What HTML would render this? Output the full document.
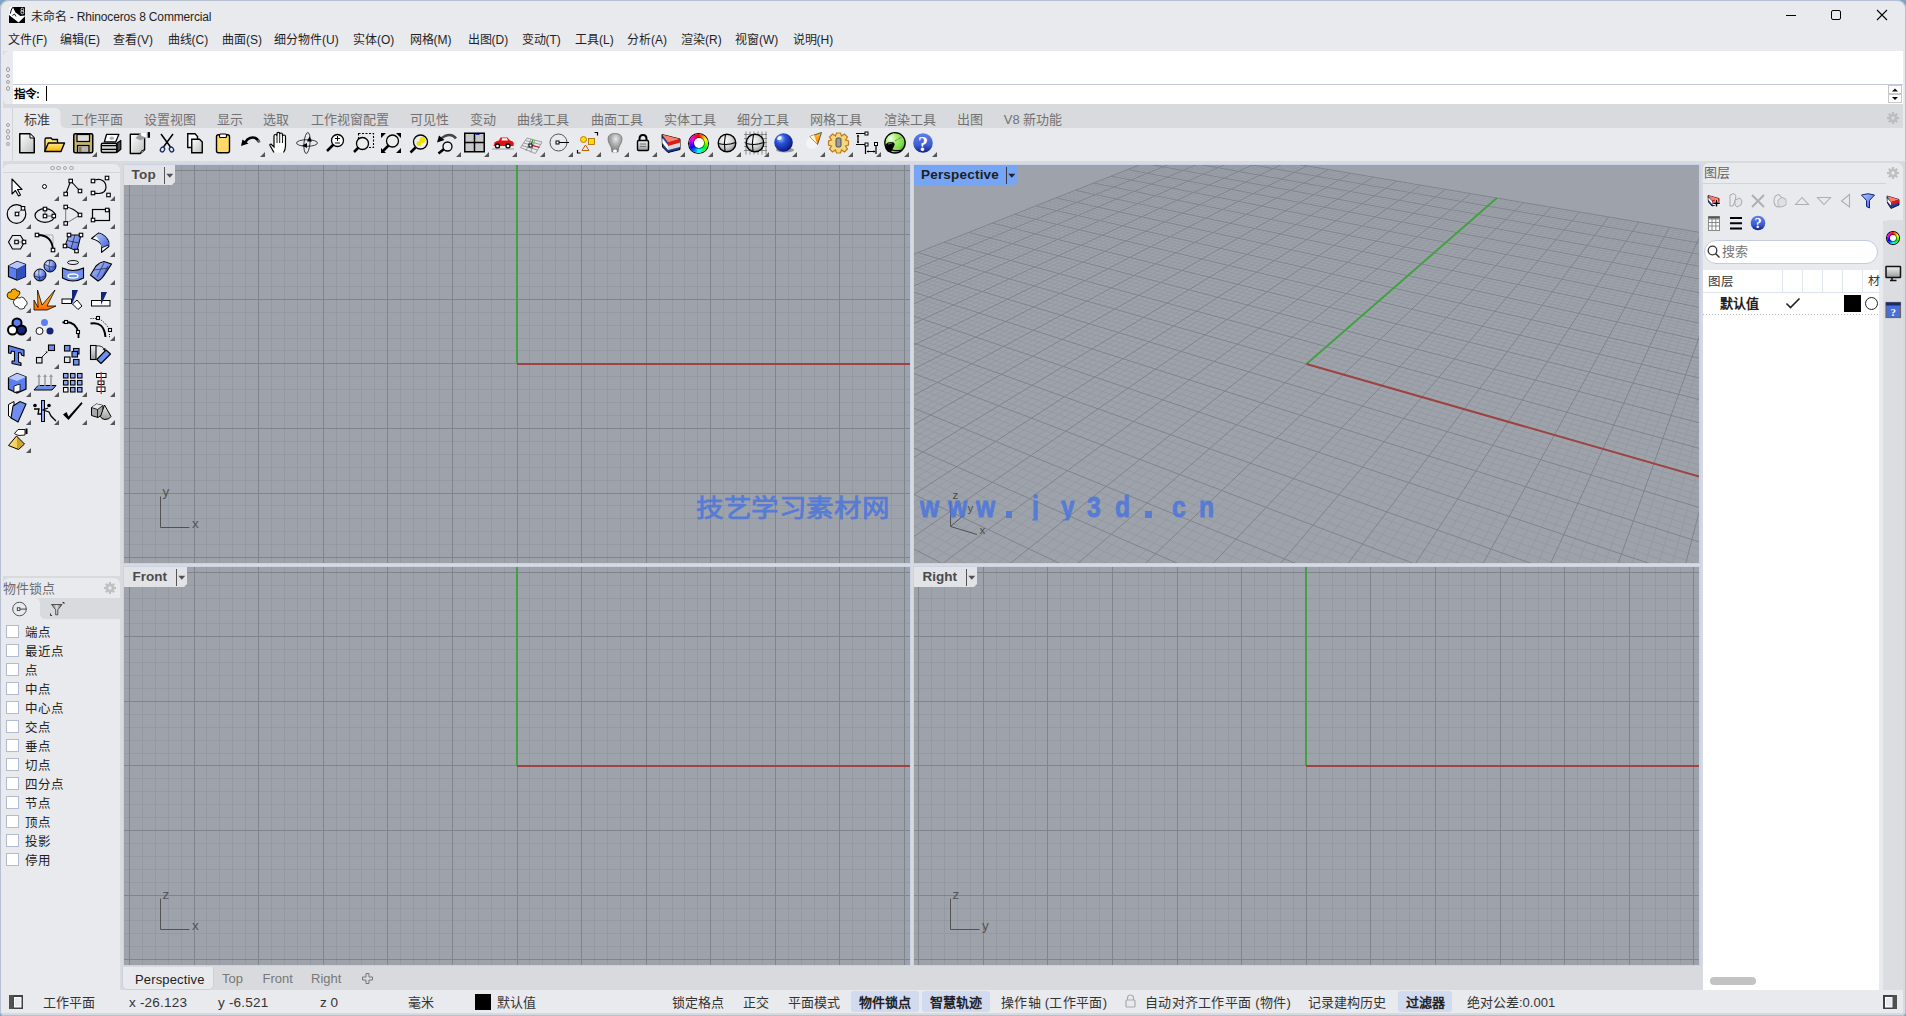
<!DOCTYPE html>
<html lang="zh-CN"><head><meta charset="utf-8"><title>Rhino</title>
<style>
html,body{margin:0;padding:0}
body{width:1906px;height:1016px;overflow:hidden;position:relative;background:#e9eaee;font-family:"Liberation Sans", sans-serif}
.r{position:absolute;display:block}
.t{position:absolute;white-space:nowrap;line-height:1;font-family:"Liberation Sans", sans-serif}
svg.r{overflow:hidden}
</style></head><body>
<div class="r" style="left:0px;top:0px;width:1906px;height:1016px;background:#e9eaee;"></div><div class="t" style="left:31px;top:10.5px;font-size:12px;color:#1f1f1f;font-weight:normal;letter-spacing:-0.15px">未命名 - Rhinoceros 8 Commercial</div><svg class="r" style="left:1780px;top:4px" width="120" height="22"><path d="M6 11.5H16" stroke="#000" stroke-width="1"/><rect x="51.5" y="6.5" width="9" height="9" rx="1.5" fill="none" stroke="#000" stroke-width="1"/><path d="M97 6L107 16M107 6L97 16" stroke="#000" stroke-width="1.1"/></svg><div class="t" style="left:8px;top:33.8px;font-size:12px;color:#1f1f1f;font-weight:normal;">文件(F)</div><div class="t" style="left:60px;top:33.8px;font-size:12px;color:#1f1f1f;font-weight:normal;">编辑(E)</div><div class="t" style="left:113px;top:33.8px;font-size:12px;color:#1f1f1f;font-weight:normal;">查看(V)</div><div class="t" style="left:167.5px;top:33.8px;font-size:12px;color:#1f1f1f;font-weight:normal;">曲线(C)</div><div class="t" style="left:222px;top:33.8px;font-size:12px;color:#1f1f1f;font-weight:normal;">曲面(S)</div><div class="t" style="left:274px;top:33.8px;font-size:12px;color:#1f1f1f;font-weight:normal;">细分物件(U)</div><div class="t" style="left:353px;top:33.8px;font-size:12px;color:#1f1f1f;font-weight:normal;">实体(O)</div><div class="t" style="left:409.5px;top:33.8px;font-size:12px;color:#1f1f1f;font-weight:normal;">网格(M)</div><div class="t" style="left:467.5px;top:33.8px;font-size:12px;color:#1f1f1f;font-weight:normal;">出图(D)</div><div class="t" style="left:521.5px;top:33.8px;font-size:12px;color:#1f1f1f;font-weight:normal;">变动(T)</div><div class="t" style="left:575px;top:33.8px;font-size:12px;color:#1f1f1f;font-weight:normal;">工具(L)</div><div class="t" style="left:627px;top:33.8px;font-size:12px;color:#1f1f1f;font-weight:normal;">分析(A)</div><div class="t" style="left:681px;top:33.8px;font-size:12px;color:#1f1f1f;font-weight:normal;">渲染(R)</div><div class="t" style="left:735px;top:33.8px;font-size:12px;color:#1f1f1f;font-weight:normal;">视窗(W)</div><div class="t" style="left:792.5px;top:33.8px;font-size:12px;color:#1f1f1f;font-weight:normal;">说明(H)</div><div class="r" style="left:3px;top:51px;width:1900px;height:54px;background:#d9dade;"></div><div class="r" style="left:3px;top:51px;width:10px;height:54px;background:#e9eaee;border-radius:6px 0 0 6px"></div><div class="r" style="left:13px;top:51px;width:1890px;height:54px;background:#ffffff;"></div><div class="r" style="left:13px;top:84px;width:1890px;height:1px;background:#c3cadb;"></div><div class="r" style="left:5.5px;top:67.3px;width:2.5px;height:2.5px;border:1px solid #a0a0a0;border-radius:50%"></div><div class="r" style="left:5.5px;top:73.6px;width:2.5px;height:2.5px;border:1px solid #a0a0a0;border-radius:50%"></div><div class="r" style="left:5.5px;top:79.9px;width:2.5px;height:2.5px;border:1px solid #a0a0a0;border-radius:50%"></div><div class="r" style="left:5.5px;top:86.2px;width:2.5px;height:2.5px;border:1px solid #a0a0a0;border-radius:50%"></div><div class="t" style="left:14px;top:88.5px;font-size:11.5px;color:#000;font-weight:bold;">指令:</div><div class="r" style="left:46px;top:86px;width:1px;height:15px;background:#000;"></div><svg class="r" style="left:1888px;top:85px" width="15" height="19"><rect x="0.5" y="0.5" width="13" height="8" fill="#fff" stroke="#c8c8c8"/><rect x="0.5" y="9.5" width="13" height="8" fill="#fff" stroke="#c8c8c8"/><path d="M4 6.5L7 3.5L10 6.5Z" fill="#000"/><path d="M4 12L7 15L10 12Z" fill="#000"/></svg><div class="r" style="left:3px;top:104px;width:1900px;height:4px;background:#d9dade;"></div><div class="r" style="left:3px;top:108px;width:1900px;height:53px;background:#e9eaee;border-radius:6px 6px 0 0"></div><div class="r" style="left:13px;top:108px;width:1890px;height:20px;background:#d9dade;"></div><svg class="r" style="left:13px;top:108px" width="60" height="20"><path d="M0 0H41Q47.5 0 47.5 6V14Q47.5 20 53.5 20H0Z" fill="#e9eaee"/></svg><div class="r" style="left:12px;top:108px;width:1px;height:53px;background:#d3d4d8;"></div><div class="r" style="left:5.5px;top:122.7px;width:2.5px;height:2.5px;border:1px solid #a0a0a0;border-radius:50%"></div><div class="r" style="left:5.5px;top:129px;width:2.5px;height:2.5px;border:1px solid #a0a0a0;border-radius:50%"></div><div class="r" style="left:5.5px;top:135.3px;width:2.5px;height:2.5px;border:1px solid #a0a0a0;border-radius:50%"></div><div class="r" style="left:5.5px;top:141.6px;width:2.5px;height:2.5px;border:1px solid #a0a0a0;border-radius:50%"></div><div class="t" style="left:24px;top:112.5px;font-size:13px;color:#3a3a3a;font-weight:normal;">标准</div><div class="t" style="left:70.5px;top:112.5px;font-size:13px;color:#727272;font-weight:normal;">工作平面</div><div class="t" style="left:143.6px;top:112.5px;font-size:13px;color:#727272;font-weight:normal;">设置视图</div><div class="t" style="left:217px;top:112.5px;font-size:13px;color:#727272;font-weight:normal;">显示</div><div class="t" style="left:263px;top:112.5px;font-size:13px;color:#727272;font-weight:normal;">选取</div><div class="t" style="left:310.6px;top:112.5px;font-size:13px;color:#727272;font-weight:normal;">工作视窗配置</div><div class="t" style="left:410px;top:112.5px;font-size:13px;color:#727272;font-weight:normal;">可见性</div><div class="t" style="left:470px;top:112.5px;font-size:13px;color:#727272;font-weight:normal;">变动</div><div class="t" style="left:517.3px;top:112.5px;font-size:13px;color:#727272;font-weight:normal;">曲线工具</div><div class="t" style="left:590.6px;top:112.5px;font-size:13px;color:#727272;font-weight:normal;">曲面工具</div><div class="t" style="left:663.7px;top:112.5px;font-size:13px;color:#727272;font-weight:normal;">实体工具</div><div class="t" style="left:737.2px;top:112.5px;font-size:13px;color:#727272;font-weight:normal;">细分工具</div><div class="t" style="left:810.3px;top:112.5px;font-size:13px;color:#727272;font-weight:normal;">网格工具</div><div class="t" style="left:883.8px;top:112.5px;font-size:13px;color:#727272;font-weight:normal;">渲染工具</div><div class="t" style="left:957.4px;top:112.5px;font-size:13px;color:#727272;font-weight:normal;">出图</div><div class="t" style="left:1003.8px;top:112.5px;font-size:13px;color:#727272;font-weight:normal;">V8 新功能</div><svg class="r" style="left:1887px;top:112px" width="12" height="12" viewBox="0 0 12 12"><g fill="#bdbdbd"><circle cx="6" cy="6" r="4.2"/><rect x="4.9" y="0" width="2.2" height="3.5" transform="rotate(0 6 6)"/><rect x="4.9" y="0" width="2.2" height="3.5" transform="rotate(45 6 6)"/><rect x="4.9" y="0" width="2.2" height="3.5" transform="rotate(90 6 6)"/><rect x="4.9" y="0" width="2.2" height="3.5" transform="rotate(135 6 6)"/><rect x="4.9" y="0" width="2.2" height="3.5" transform="rotate(180 6 6)"/><rect x="4.9" y="0" width="2.2" height="3.5" transform="rotate(225 6 6)"/><rect x="4.9" y="0" width="2.2" height="3.5" transform="rotate(270 6 6)"/><rect x="4.9" y="0" width="2.2" height="3.5" transform="rotate(315 6 6)"/></g><circle cx="6" cy="6" r="1.7" fill="#d9dade"/></svg><div class="r" style="left:0px;top:161px;width:1906px;height:829px;background:#d9dade;"></div><div class="r" style="left:0px;top:161px;width:3px;height:829px;background:#e9eaee;"></div><div class="r" style="left:3px;top:164px;width:117px;height:412px;background:#e9eaee;border-radius:6px 6px 0 0"></div><div class="r" style="left:3px;top:172px;width:117px;height:1px;background:#d5d6da;"></div><div class="r" style="left:50px;top:165.6px;width:2.5px;height:2.5px;border:1px solid #a8a8a8;border-radius:50%"></div><div class="r" style="left:56.3px;top:165.6px;width:2.5px;height:2.5px;border:1px solid #a8a8a8;border-radius:50%"></div><div class="r" style="left:62.599999999999994px;top:165.6px;width:2.5px;height:2.5px;border:1px solid #a8a8a8;border-radius:50%"></div><div class="r" style="left:69px;top:165.6px;width:2.5px;height:2.5px;border:1px solid #a8a8a8;border-radius:50%"></div><div class="r" style="left:3px;top:578px;width:117px;height:412px;background:#e9eaee;border-radius:6px 6px 0 0"></div><div class="t" style="left:3px;top:582px;font-size:13px;color:#6d6d6d;font-weight:normal;">物件锁点</div><svg class="r" style="left:104px;top:582px" width="12" height="12" viewBox="0 0 12 12"><g fill="#c0c0c0"><circle cx="6" cy="6" r="4.2"/><rect x="4.9" y="0" width="2.2" height="3.5" transform="rotate(0 6 6)"/><rect x="4.9" y="0" width="2.2" height="3.5" transform="rotate(45 6 6)"/><rect x="4.9" y="0" width="2.2" height="3.5" transform="rotate(90 6 6)"/><rect x="4.9" y="0" width="2.2" height="3.5" transform="rotate(135 6 6)"/><rect x="4.9" y="0" width="2.2" height="3.5" transform="rotate(180 6 6)"/><rect x="4.9" y="0" width="2.2" height="3.5" transform="rotate(225 6 6)"/><rect x="4.9" y="0" width="2.2" height="3.5" transform="rotate(270 6 6)"/><rect x="4.9" y="0" width="2.2" height="3.5" transform="rotate(315 6 6)"/></g><circle cx="6" cy="6" r="1.7" fill="#e9eaee"/></svg><div class="r" style="left:3px;top:598px;width:117px;height:21px;background:#d9dade;"></div><svg class="r" style="left:3px;top:598px" width="50" height="21"><path d="M0 0H31Q37 0 37 6V15Q37 21 43 21H0Z" fill="#e9eaee"/></svg><svg class="r" style="left:11px;top:601px" width="18" height="17"><circle cx="8.5" cy="8" r="6.8" fill="none" stroke="#444" stroke-width="0.9"/><rect x="6.3" y="6.8" width="2.6" height="2.6" fill="#fff" stroke="#333" stroke-width="0.9"/><path d="M9 8.1H15.5" stroke="#333" stroke-width="0.9"/></svg><svg class="r" style="left:49px;top:601px" width="16" height="16"><defs><linearGradient id="gFun" x1="0" y1="0" x2="1" y2="0"><stop offset="0" stop-color="#666"/><stop offset="0.5" stop-color="#ddd"/><stop offset="1" stop-color="#555"/></linearGradient></defs><path d="M2.5 3.5H13L8.8 8.8V13.8H6.7V8.8Z" fill="url(#gFun)" stroke="#333" stroke-width="0.8"/><path d="M13.5 1.5H15V3M1.5 12.5V14.5H3" stroke="#333" fill="none" stroke-width="1"/></svg><div class="r" style="left:6px;top:625px;width:13px;height:13px;background:#ffffff;box-sizing:border-box;border:1px solid #b2bbd0"></div><div class="t" style="left:25px;top:627px;font-size:12.5px;color:#1f1f1f;font-weight:normal;">端点</div><div class="r" style="left:6px;top:644px;width:13px;height:13px;background:#ffffff;box-sizing:border-box;border:1px solid #b2bbd0"></div><div class="t" style="left:25px;top:646px;font-size:12.5px;color:#1f1f1f;font-weight:normal;">最近点</div><div class="r" style="left:6px;top:663px;width:13px;height:13px;background:#ffffff;box-sizing:border-box;border:1px solid #b2bbd0"></div><div class="t" style="left:25px;top:665px;font-size:12.5px;color:#1f1f1f;font-weight:normal;">点</div><div class="r" style="left:6px;top:682px;width:13px;height:13px;background:#ffffff;box-sizing:border-box;border:1px solid #b2bbd0"></div><div class="t" style="left:25px;top:684px;font-size:12.5px;color:#1f1f1f;font-weight:normal;">中点</div><div class="r" style="left:6px;top:701px;width:13px;height:13px;background:#ffffff;box-sizing:border-box;border:1px solid #b2bbd0"></div><div class="t" style="left:25px;top:703px;font-size:12.5px;color:#1f1f1f;font-weight:normal;">中心点</div><div class="r" style="left:6px;top:720px;width:13px;height:13px;background:#ffffff;box-sizing:border-box;border:1px solid #b2bbd0"></div><div class="t" style="left:25px;top:722px;font-size:12.5px;color:#1f1f1f;font-weight:normal;">交点</div><div class="r" style="left:6px;top:739px;width:13px;height:13px;background:#ffffff;box-sizing:border-box;border:1px solid #b2bbd0"></div><div class="t" style="left:25px;top:741px;font-size:12.5px;color:#1f1f1f;font-weight:normal;">垂点</div><div class="r" style="left:6px;top:758px;width:13px;height:13px;background:#ffffff;box-sizing:border-box;border:1px solid #b2bbd0"></div><div class="t" style="left:25px;top:760px;font-size:12.5px;color:#1f1f1f;font-weight:normal;">切点</div><div class="r" style="left:6px;top:777px;width:13px;height:13px;background:#ffffff;box-sizing:border-box;border:1px solid #b2bbd0"></div><div class="t" style="left:25px;top:779px;font-size:12.5px;color:#1f1f1f;font-weight:normal;">四分点</div><div class="r" style="left:6px;top:796px;width:13px;height:13px;background:#ffffff;box-sizing:border-box;border:1px solid #b2bbd0"></div><div class="t" style="left:25px;top:798px;font-size:12.5px;color:#1f1f1f;font-weight:normal;">节点</div><div class="r" style="left:6px;top:815px;width:13px;height:13px;background:#ffffff;box-sizing:border-box;border:1px solid #b2bbd0"></div><div class="t" style="left:25px;top:817px;font-size:12.5px;color:#1f1f1f;font-weight:normal;">顶点</div><div class="r" style="left:6px;top:834px;width:13px;height:13px;background:#ffffff;box-sizing:border-box;border:1px solid #b2bbd0"></div><div class="t" style="left:25px;top:836px;font-size:12.5px;color:#1f1f1f;font-weight:normal;">投影</div><div class="r" style="left:6px;top:853px;width:13px;height:13px;background:#ffffff;box-sizing:border-box;border:1px solid #b2bbd0"></div><div class="t" style="left:25px;top:855px;font-size:12.5px;color:#1f1f1f;font-weight:normal;">停用</div><div class="r" style="left:123px;top:164px;width:788px;height:400px;background:#c9d2e6;"></div><div class="r" style="left:913px;top:164px;width:788px;height:400px;background:#c9d2e6;"></div><div class="r" style="left:123px;top:566px;width:788px;height:400px;background:#c9d2e6;"></div><div class="r" style="left:913px;top:566px;width:788px;height:400px;background:#c9d2e6;"></div><svg class="r" style="left:124px;top:165px" width="786" height="398" viewBox="0 0 786 398"><rect width="786" height="398" fill="#9ea3ab"/><path d="M18.5 0V398M31.5 0V398M44.5 0V398M57.5 0V398M82.5 0V398M95.5 0V398M108.5 0V398M121.5 0V398M147.5 0V398M160.5 0V398M173.5 0V398M186.5 0V398M212.5 0V398M225.5 0V398M237.5 0V398M250.5 0V398M276.5 0V398M289.5 0V398M302.5 0V398M315.5 0V398M341.5 0V398M354.5 0V398M367.5 0V398M380.5 0V398M405.5 0V398M418.5 0V398M431.5 0V398M444.5 0V398M470.5 0V398M483.5 0V398M496.5 0V398M509.5 0V398M535.5 0V398M548.5 0V398M560.5 0V398M573.5 0V398M599.5 0V398M612.5 0V398M625.5 0V398M638.5 0V398M664.5 0V398M677.5 0V398M690.5 0V398M703.5 0V398M728.5 0V398M741.5 0V398M754.5 0V398M767.5 0V398M0 18.5H786M0 30.5H786M0 43.5H786M0 56.5H786M0 82.5H786M0 95.5H786M0 108.5H786M0 121.5H786M0 147.5H786M0 160.5H786M0 173.5H786M0 185.5H786M0 211.5H786M0 224.5H786M0 237.5H786M0 250.5H786M0 276.5H786M0 289.5H786M0 302.5H786M0 315.5H786M0 340.5H786M0 353.5H786M0 366.5H786M0 379.5H786" stroke="#959aa2" stroke-width="1" fill="none"/><path d="M5.5 0V398M70.5 0V398M134.5 0V398M199.5 0V398M263.5 0V398M328.5 0V398M393.5 0V398M457.5 0V398M522.5 0V398M586.5 0V398M651.5 0V398M715.5 0V398M780.5 0V398M0 5.5H786M0 69.5H786M0 134.5H786M0 198.5H786M0 263.5H786M0 328.5H786M0 392.5H786" stroke="#80848c" stroke-width="1" fill="none"/><rect x="392" y="0" width="2" height="199" fill="#43a043"/><rect x="393" y="198" width="393" height="2" fill="#9e4242"/></svg><svg class="r" style="left:914px;top:165px" width="785" height="398" viewBox="0 0 785 398"><rect width="785" height="398" fill="#9ea3ab"/><path d="M-623.8 340.8L277.7 -18.7M-612.6 331.4L1547.5 2267.1M-620.0 344.2L281.4 -18.0M-598.0 325.7L1525.0 2171.2M-616.2 347.7L285.1 -17.4M-583.6 320.0L1504.1 2082.2M-612.4 351.3L288.9 -16.8M-569.5 314.4L1484.7 1999.4M-604.6 358.5L296.4 -15.5M-542.1 303.6L1449.7 1850.0M-600.6 362.1L300.2 -14.8M-528.8 298.3L1433.9 1782.4M-596.6 365.9L304.1 -14.2M-515.7 293.1L1419.0 1719.0M-592.6 369.6L307.9 -13.5M-502.8 288.0L1405.0 1659.3M-584.3 377.2L315.6 -12.2M-477.8 278.1L1379.4 1550.0M-580.1 381.1L319.5 -11.6M-465.6 273.3L1367.7 1499.8M-575.9 385.0L323.4 -10.9M-453.5 268.5L1356.5 1452.3M-571.6 389.0L327.4 -10.2M-441.7 263.9L1346.0 1407.3M-562.8 397.1L335.3 -8.9M-418.7 254.8L1326.4 1323.9M-558.4 401.2L339.3 -8.2M-407.5 250.3L1317.4 1285.2M-553.9 405.4L343.3 -7.5M-396.5 245.9L1308.7 1248.3M-549.3 409.6L347.3 -6.8M-385.6 241.6L1300.5 1213.1M-540.0 418.2L355.4 -5.5M-364.4 233.3L1285.1 1147.4M-535.3 422.6L359.5 -4.8M-354.0 229.2L1277.8 1116.6M-530.5 427.0L363.6 -4.1M-343.8 225.1L1270.9 1087.1M-525.6 431.5L367.8 -3.4M-333.8 221.2L1264.3 1058.9M-515.7 440.7L376.1 -2.0M-314.2 213.4L1251.9 1005.7M-510.7 445.3L380.3 -1.3M-304.6 209.6L1246.0 980.7M-505.6 450.0L384.5 -0.5M-295.2 205.9L1240.3 956.6M-500.4 454.8L388.7 0.2M-285.9 202.2L1234.9 933.4M-489.8 464.6L397.3 1.6M-267.7 195.0L1224.6 889.5M-484.5 469.6L401.6 2.3M-258.8 191.5L1219.8 868.8M-479.0 474.6L405.9 3.1M-250.0 188.0L1215.1 848.7M-473.5 479.7L410.2 3.8M-241.4 184.6L1210.5 829.3M-462.2 490.1L419.0 5.3M-224.5 177.9L1201.9 792.5M-456.5 495.5L423.4 6.0M-216.2 174.6L1197.8 775.0M-450.6 500.9L427.8 6.8M-208.1 171.4L1193.8 758.1M-444.7 506.3L432.3 7.5M-200.0 168.2L1190.0 741.6M-432.6 517.5L441.3 9.1M-184.3 162.0L1182.6 710.3M-426.5 523.2L445.8 9.8M-176.5 159.0L1179.1 695.3M-420.2 529.0L450.3 10.6M-168.9 155.9L1175.7 680.8M-413.9 534.8L454.9 11.4M-161.4 153.0L1172.4 666.7M-400.9 546.8L464.1 12.9M-146.7 147.1L1166.1 639.7M-394.3 553.0L468.8 13.7M-139.5 144.3L1163.0 626.8M-387.5 559.2L473.5 14.5M-132.4 141.5L1160.1 614.2M-380.7 565.5L478.1 15.3M-125.3 138.7L1157.2 602.0M-366.7 578.4L487.6 16.9M-111.5 133.2L1151.7 578.5M-359.6 585.0L492.4 17.7M-104.8 130.6L1149.1 567.2M-352.3 591.7L497.2 18.5M-98.1 127.9L1146.5 556.2M-345.0 598.5L502.0 19.4M-91.5 125.3L1144.0 545.5M-329.9 612.5L511.7 21.0M-78.6 120.2L1139.1 524.8M-322.2 619.6L516.6 21.8M-72.2 117.7L1136.8 514.9M-314.3 626.9L521.5 22.7M-66.0 115.2L1134.5 505.2M-306.4 634.2L526.5 23.5M-59.8 112.7L1132.3 495.7M-290.0 649.3L536.5 25.2M-47.6 107.9L1128.0 477.5M-281.7 657.1L541.5 26.1M-41.6 105.6L1126.0 468.6M-273.2 664.9L546.6 26.9M-35.7 103.2L1124.0 460.0M-264.5 672.9L551.7 27.8M-29.9 100.9L1122.0 451.6M-246.8 689.3L561.9 29.5M-18.4 96.4L1118.2 435.3M-237.7 697.8L567.1 30.4M-12.8 94.2L1116.3 427.4M-228.4 706.3L572.3 31.3M-7.2 92.0L1114.5 419.7M-219.0 715.0L577.5 32.2M-1.7 89.8L1112.7 412.2M-199.6 732.9L588.1 33.9M9.1 85.5L1109.3 397.6M-189.7 742.1L593.4 34.9M14.4 83.4L1107.7 390.5M-179.6 751.5L598.8 35.8M19.7 81.3L1106.0 383.6M-169.3 761.0L604.1 36.7M24.9 79.3L1104.4 376.8M-148.1 780.6L615.0 38.5M35.1 75.2L1101.4 363.6M-137.2 790.6L620.5 39.4M40.1 73.2L1099.9 357.2M-126.1 800.9L626.0 40.4M45.1 71.3L1098.4 350.9M-114.8 811.4L631.5 41.3M50.0 69.3L1096.9 344.8M-91.5 832.9L642.7 43.2M59.7 65.5L1094.1 332.8M-79.5 844.0L648.3 44.2M64.4 63.6L1092.8 327.0M-67.3 855.3L654.0 45.1M69.1 61.8L1091.4 321.3M-54.8 866.8L659.7 46.1M73.8 59.9L1090.1 315.7M-29.1 890.6L671.2 48.0M83.0 56.3L1087.6 304.8M-15.8 902.9L677.0 49.0M87.5 54.5L1086.3 299.5M-2.3 915.4L682.8 50.0M91.9 52.7L1085.1 294.3M11.6 928.2L688.7 51.0M96.4 51.0L1083.9 289.2M40.2 954.7L700.5 53.0M105.1 47.5L1081.6 279.3M54.9 968.3L706.5 54.0M109.4 45.8L1080.5 274.4M70.0 982.3L712.5 55.0M113.6 44.2L1079.3 269.6M85.4 996.5L718.5 56.1M117.8 42.5L1078.2 265.0M117.3 1026.0L730.7 58.1M126.1 39.2L1076.1 255.8M133.9 1041.3L736.9 59.2M130.2 37.6L1075.1 251.4M150.8 1056.9L743.1 60.2M134.2 36.0L1074.0 247.0M168.1 1072.9L749.3 61.3M138.2 34.4L1073.0 242.7M204.0 1106.1L761.9 63.4M146.1 31.3L1071.0 234.2M222.6 1123.3L768.2 64.5M150.0 29.8L1070.1 230.1M241.6 1141.0L774.6 65.6M153.8 28.3L1069.1 226.1M261.2 1159.0L781.1 66.6M157.6 26.8L1068.2 222.1M301.8 1196.6L794.0 68.8M165.1 23.8L1066.4 214.3M322.9 1216.1L800.6 70.0M168.8 22.3L1065.5 210.5M344.6 1236.2L807.2 71.1M172.5 20.9L1064.6 206.7M366.9 1256.8L813.8 72.2M176.1 19.4L1063.7 203.1M413.3 1299.7L827.2 74.5M183.3 16.6L1062.0 195.8M437.5 1322.0L833.9 75.6M186.8 15.2L1061.2 192.3M462.3 1345.0L840.7 76.8M190.3 13.8L1060.4 188.8M487.9 1368.7L847.6 77.9M193.8 12.5L1059.6 185.4M541.4 1418.2L861.4 80.3M200.6 9.7L1058.0 178.7M569.4 1444.0L868.3 81.4M204.0 8.4L1057.3 175.4M598.2 1470.6L875.4 82.6M207.3 7.1L1056.5 172.2M627.9 1498.1L882.4 83.8M210.6 5.8L1055.7 169.0M690.2 1555.8L896.7 86.2M217.2 3.2L1054.3 162.7M722.9 1586.0L903.9 87.5M220.4 1.9L1053.6 159.7M756.7 1617.2L911.1 88.7M223.6 0.6L1052.9 156.6M791.6 1649.5L918.4 89.9M226.8 -0.6L1052.2 153.7M865.2 1717.5L933.2 92.4M233.0 -3.1L1050.8 147.8M903.9 1753.3L940.6 93.7M236.1 -4.3L1050.1 145.0M944.1 1790.5L948.1 95.0M239.2 -5.5L1049.5 142.1M985.7 1829.0L955.7 96.2M242.2 -6.7L1048.8 139.3M1073.8 1910.4L970.9 98.8M248.2 -9.1L1047.5 133.9M1120.5 1953.6L978.6 100.1M251.2 -10.3L1046.9 131.2M1169.0 1998.4L986.4 101.4M254.1 -11.4L1046.3 128.5M1219.5 2045.1L994.2 102.8M257.0 -12.6L1045.7 125.9M1326.9 2144.5L1009.9 105.4M262.8 -14.8L1044.5 120.8M1384.1 2197.4L1017.9 106.8M265.6 -16.0L1043.9 118.3M1443.9 2252.6L1025.9 108.1M268.4 -17.1L1043.3 115.8M1506.4 2310.4L1034.0 109.5M271.2 -18.2L1042.7 113.3" stroke="#959aa2" stroke-width="1" fill="none"/><path d="M-627.5 337.3L274.0 -19.3M-627.5 337.3L1571.8 2370.9M-608.5 354.9L292.6 -16.1M-555.7 308.9L1466.6 1922.2M-588.5 373.4L311.8 -12.9M-490.2 283.0L1391.9 1603.1M-567.2 393.0L331.3 -9.6M-430.1 259.3L1336.0 1364.5M-544.7 413.9L351.4 -6.2M-374.9 237.4L1292.6 1179.5M-520.7 436.1L371.9 -2.7M-323.9 217.3L1258.0 1031.8M-495.2 459.7L393.0 0.9M-276.7 198.6L1229.7 911.1M-467.9 484.9L414.6 4.6M-232.9 181.2L1206.1 810.6M-438.7 511.9L436.8 8.3M-192.1 165.1L1186.2 725.7M-407.4 540.8L459.5 12.2M-154.0 150.0L1169.2 653.0M-373.8 571.9L482.9 16.1M-118.4 135.9L1154.4 590.1M-337.5 605.5L506.8 20.2M-85.0 122.7L1141.5 535.0M-298.3 641.7L531.5 24.4M-53.6 110.3L1130.2 486.5M-255.7 681.1L556.8 28.6M-24.1 98.7L1120.1 443.4M-209.4 723.9L582.8 33.1M3.7 87.6L1111.0 404.8M-158.8 770.7L609.5 37.6M30.0 77.2L1102.9 370.1M-103.3 822.0L637.1 42.3M54.9 67.4L1095.5 338.7M-42.1 878.6L665.4 47.1M78.4 58.1L1088.8 310.2M25.7 941.3L694.6 52.0M100.7 49.3L1082.7 284.2M101.2 1011.1L724.6 57.1M122.0 40.9L1077.2 260.3M185.8 1089.3L755.6 62.3M142.2 32.9L1072.0 238.4M281.2 1177.6L787.5 67.7M161.4 25.3L1067.3 218.2M389.8 1277.9L820.4 73.3M179.7 18.0L1062.9 199.4M514.3 1393.1L854.4 79.1M197.2 11.1L1058.8 182.0M658.6 1526.5L889.5 85.0M213.9 4.5L1055.0 165.8M827.8 1682.9L925.8 91.2M229.9 -1.8L1051.5 150.7M1028.9 1868.9L963.3 97.5M245.2 -7.9L1048.2 136.6M1272.1 2093.7L1002.0 104.1M259.9 -13.7L1045.0 123.3M1571.8 2370.9L1042.1 110.9M274.0 -19.3L1042.1 110.9" stroke="#80848c" stroke-width="1" fill="none"/><path d="M392.5 199.0L582.8 33.1" stroke="#43a043" stroke-width="2" fill="none"/><path d="M392.5 199.0L1111.0 404.8" stroke="#9e4242" stroke-width="2" fill="none"/></svg><svg class="r" style="left:124px;top:567px" width="786" height="398" viewBox="0 0 786 398"><rect width="786" height="398" fill="#9ea3ab"/><path d="M18.5 0V398M31.5 0V398M44.5 0V398M57.5 0V398M82.5 0V398M95.5 0V398M108.5 0V398M121.5 0V398M147.5 0V398M160.5 0V398M173.5 0V398M186.5 0V398M212.5 0V398M225.5 0V398M237.5 0V398M250.5 0V398M276.5 0V398M289.5 0V398M302.5 0V398M315.5 0V398M341.5 0V398M354.5 0V398M367.5 0V398M380.5 0V398M405.5 0V398M418.5 0V398M431.5 0V398M444.5 0V398M470.5 0V398M483.5 0V398M496.5 0V398M509.5 0V398M535.5 0V398M548.5 0V398M560.5 0V398M573.5 0V398M599.5 0V398M612.5 0V398M625.5 0V398M638.5 0V398M664.5 0V398M677.5 0V398M690.5 0V398M703.5 0V398M728.5 0V398M741.5 0V398M754.5 0V398M767.5 0V398M0 18.5H786M0 31.5H786M0 43.5H786M0 56.5H786M0 82.5H786M0 95.5H786M0 108.5H786M0 121.5H786M0 147.5H786M0 160.5H786M0 173.5H786M0 186.5H786M0 211.5H786M0 224.5H786M0 237.5H786M0 250.5H786M0 276.5H786M0 289.5H786M0 302.5H786M0 315.5H786M0 341.5H786M0 353.5H786M0 366.5H786M0 379.5H786" stroke="#959aa2" stroke-width="1" fill="none"/><path d="M5.5 0V398M70.5 0V398M134.5 0V398M199.5 0V398M263.5 0V398M328.5 0V398M393.5 0V398M457.5 0V398M522.5 0V398M586.5 0V398M651.5 0V398M715.5 0V398M780.5 0V398M0 5.5H786M0 69.5H786M0 134.5H786M0 198.5H786M0 263.5H786M0 328.5H786M0 392.5H786" stroke="#80848c" stroke-width="1" fill="none"/><rect x="392" y="0" width="2" height="199" fill="#43a043"/><rect x="393" y="198" width="393" height="2" fill="#9e4242"/></svg><svg class="r" style="left:914px;top:567px" width="785" height="398" viewBox="0 0 785 398"><rect width="785" height="398" fill="#9ea3ab"/><path d="M17.5 0V398M30.5 0V398M43.5 0V398M56.5 0V398M82.5 0V398M95.5 0V398M108.5 0V398M121.5 0V398M146.5 0V398M159.5 0V398M172.5 0V398M185.5 0V398M211.5 0V398M224.5 0V398M237.5 0V398M250.5 0V398M276.5 0V398M288.5 0V398M301.5 0V398M314.5 0V398M340.5 0V398M353.5 0V398M366.5 0V398M379.5 0V398M405.5 0V398M418.5 0V398M431.5 0V398M443.5 0V398M469.5 0V398M482.5 0V398M495.5 0V398M508.5 0V398M534.5 0V398M547.5 0V398M560.5 0V398M573.5 0V398M598.5 0V398M611.5 0V398M624.5 0V398M637.5 0V398M663.5 0V398M676.5 0V398M689.5 0V398M702.5 0V398M728.5 0V398M741.5 0V398M753.5 0V398M766.5 0V398M0 18.5H785M0 31.5H785M0 43.5H785M0 56.5H785M0 82.5H785M0 95.5H785M0 108.5H785M0 121.5H785M0 147.5H785M0 160.5H785M0 173.5H785M0 186.5H785M0 211.5H785M0 224.5H785M0 237.5H785M0 250.5H785M0 276.5H785M0 289.5H785M0 302.5H785M0 315.5H785M0 341.5H785M0 353.5H785M0 366.5H785M0 379.5H785" stroke="#959aa2" stroke-width="1" fill="none"/><path d="M4.5 0V398M69.5 0V398M133.5 0V398M198.5 0V398M263.5 0V398M327.5 0V398M392.5 0V398M456.5 0V398M521.5 0V398M586.5 0V398M650.5 0V398M715.5 0V398M779.5 0V398M0 5.5H785M0 69.5H785M0 134.5H785M0 198.5H785M0 263.5H785M0 328.5H785M0 392.5H785" stroke="#80848c" stroke-width="1" fill="none"/><rect x="391" y="0" width="2" height="199" fill="#43a043"/><rect x="392" y="198" width="393" height="2" fill="#9e4242"/></svg><svg class="r" style="left:124px;top:165px" width="51" height="20"><path d="M0 0H51V17L48 20H0Z" fill="#e2e3e7"/></svg><div class="t" style="left:131.5px;top:168.4px;font-size:13.5px;color:#4a4a4a;font-weight:bold;letter-spacing:0.3px">Top</div><div class="r" style="left:164px;top:167px;width:1px;height:17px;background:#555555;"></div><svg class="r" style="left:165.5px;top:172.5px" width="8" height="6"><path d="M0.3 0.8H7.3L3.8 4.8Z" fill="#505050"/></svg><svg class="r" style="left:914px;top:165px" width="103" height="20"><path d="M0 0H103V17L100 20H0Z" fill="#75a5f4"/></svg><div class="t" style="left:921px;top:168.4px;font-size:13.5px;color:#1e1e1e;font-weight:bold;letter-spacing:0.2px">Perspective</div><div class="r" style="left:1006px;top:167px;width:1px;height:17px;background:#3a3a3a;"></div><svg class="r" style="left:1007.5px;top:172.5px" width="8" height="6"><path d="M0.3 0.8H7.3L3.8 4.8Z" fill="#222"/></svg><svg class="r" style="left:124px;top:567px" width="63" height="20"><path d="M0 0H63V17L60 20H0Z" fill="#e2e3e7"/></svg><div class="t" style="left:132.5px;top:570.4px;font-size:13.5px;color:#4a4a4a;font-weight:bold;letter-spacing:0px">Front</div><div class="r" style="left:176px;top:569px;width:1px;height:17px;background:#555555;"></div><svg class="r" style="left:177.5px;top:574.5px" width="8" height="6"><path d="M0.3 0.8H7.3L3.8 4.8Z" fill="#505050"/></svg><svg class="r" style="left:914px;top:567px" width="63" height="20"><path d="M0 0H63V17L60 20H0Z" fill="#e2e3e7"/></svg><div class="t" style="left:922.5px;top:570.4px;font-size:13.5px;color:#4a4a4a;font-weight:bold;letter-spacing:0px">Right</div><div class="r" style="left:966px;top:569px;width:1px;height:17px;background:#555555;"></div><svg class="r" style="left:967.5px;top:574.5px" width="8" height="6"><path d="M0.3 0.8H7.3L3.8 4.8Z" fill="#505050"/></svg><svg class="r" style="left:158px;top:493px" width="40" height="40"><path d="M2.5 3.5V34.5H31.5" stroke="#525252" stroke-width="1" fill="none"/></svg><div class="t" style="left:192px;top:516.5px;font-size:13.5px;color:#555555;font-weight:normal;">x</div><div class="t" style="left:162.5px;top:485px;font-size:13.5px;color:#555555;font-weight:normal;">y</div><svg class="r" style="left:158px;top:895px" width="40" height="40"><path d="M2.5 3.5V34.5H31.5" stroke="#525252" stroke-width="1" fill="none"/></svg><div class="t" style="left:192px;top:918.5px;font-size:13.5px;color:#555555;font-weight:normal;">x</div><div class="t" style="left:162.5px;top:888.2px;font-size:13.5px;color:#555555;font-weight:normal;">z</div><svg class="r" style="left:948px;top:895px" width="40" height="40"><path d="M2.5 3.5V34.5H31.5" stroke="#525252" stroke-width="1" fill="none"/></svg><div class="t" style="left:982px;top:918.5px;font-size:13.5px;color:#555555;font-weight:normal;">y</div><div class="t" style="left:952.5px;top:888.2px;font-size:13.5px;color:#555555;font-weight:normal;">z</div><svg class="r" style="left:940px;top:490px" width="50" height="50"><path d="M10.5 11V36.5L37 44.5M10.5 36.5L24.5 24.5" stroke="#525252" stroke-width="1" fill="none"/></svg><div class="t" style="left:952.5px;top:489.5px;font-size:11.5px;color:#4a4a4a;font-weight:normal;">z</div><div class="t" style="left:967.5px;top:502.5px;font-size:11.5px;color:#4a4a4a;font-weight:normal;">y</div><div class="t" style="left:979.5px;top:525px;font-size:11.5px;color:#4a4a4a;font-weight:normal;">x</div><div class="t" style="left:696px;top:494px;font-size:27.5px;color:rgba(72,116,222,0.82);font-weight:bold;letter-spacing:0.6px;transform:scaleY(0.9);transform-origin:0 26px">技艺学习素材网</div><div class="t" style="left:920.4px;top:493.25px;font-size:29px;color:#4874de;font-weight:bold;opacity:0.82;-webkit-text-stroke:0.9px #4874de;transform:scaleX(0.85);transform-origin:0 0">w</div><div class="t" style="left:948.4px;top:493.25px;font-size:29px;color:#4874de;font-weight:bold;opacity:0.82;-webkit-text-stroke:0.9px #4874de;transform:scaleX(0.85);transform-origin:0 0">w</div><div class="t" style="left:975.9px;top:493.25px;font-size:29px;color:#4874de;font-weight:bold;opacity:0.82;-webkit-text-stroke:0.9px #4874de;transform:scaleX(0.85);transform-origin:0 0">w</div><div class="t" style="left:1031.6px;top:493.25px;font-size:29px;color:#4874de;font-weight:bold;clip-path:inset(0 0 1.7px 0);opacity:0.82;-webkit-text-stroke:0.9px #4874de;transform:scaleX(0.85);transform-origin:0 0">j</div><div class="t" style="left:1060.7px;top:493.25px;font-size:29px;color:#4874de;font-weight:bold;clip-path:inset(0 0 1.7px 0);opacity:0.82;-webkit-text-stroke:0.9px #4874de;transform:scaleX(0.85);transform-origin:0 0">y</div><div class="t" style="left:1087.4px;top:493.25px;font-size:29px;color:#4874de;font-weight:bold;opacity:0.82;-webkit-text-stroke:0.9px #4874de;transform:scaleX(0.85);transform-origin:0 0">3</div><div class="t" style="left:1115.4px;top:493.25px;font-size:29px;color:#4874de;font-weight:bold;opacity:0.82;-webkit-text-stroke:0.9px #4874de;transform:scaleX(0.85);transform-origin:0 0">d</div><div class="t" style="left:1171.9px;top:493.25px;font-size:29px;color:#4874de;font-weight:bold;opacity:0.82;-webkit-text-stroke:0.9px #4874de;transform:scaleX(0.85);transform-origin:0 0">c</div><div class="t" style="left:1198.6px;top:493.25px;font-size:29px;color:#4874de;font-weight:bold;opacity:0.82;-webkit-text-stroke:0.9px #4874de;transform:scaleX(0.85);transform-origin:0 0">n</div><div class="r" style="left:1005.7px;top:511.3px;width:6.5px;height:6.5px;background:#4874de;opacity:0.82"></div><div class="r" style="left:1145px;top:511.3px;width:6.5px;height:6.5px;background:#4874de;opacity:0.82"></div><div class="r" style="left:122px;top:967px;width:92px;height:23px;background:#e9eaee;box-sizing:border-box;border:1px solid #c8d0e2;border-top:none;border-radius:0 0 5px 5px"></div><div class="t" style="left:135px;top:972.5px;font-size:13px;color:#222;font-weight:normal;letter-spacing:0.15px">Perspective</div><div class="t" style="left:222px;top:972px;font-size:13px;color:#777;font-weight:normal;">Top</div><div class="t" style="left:262.5px;top:972px;font-size:13px;color:#777;font-weight:normal;">Front</div><div class="t" style="left:311px;top:972px;font-size:13px;color:#777;font-weight:normal;">Right</div><svg class="r" style="left:362px;top:973px" width="11" height="11"><path d="M4 0.5H7V4H10.5V7H7V10.5H4V7H0.5V4H4Z" fill="none" stroke="#777" stroke-width="1"/></svg><div class="r" style="left:1703px;top:163px;width:200px;height:58px;background:#e9eaee;border-radius:6px 6px 0 0"></div><div class="r" style="left:1703px;top:220px;width:180px;height:770px;background:#e9eaee;"></div><div class="r" style="left:1883px;top:220px;width:20px;height:770px;background:#dcdde1;border-radius:6px 0 0 0"></div><div class="t" style="left:1704px;top:166px;font-size:13px;color:#666;font-weight:normal;">图层</div><svg class="r" style="left:1887px;top:167px" width="12" height="12" viewBox="0 0 12 12"><g fill="#c0c0c0"><circle cx="6" cy="6" r="4.2"/><rect x="4.9" y="0" width="2.2" height="3.5" transform="rotate(0 6 6)"/><rect x="4.9" y="0" width="2.2" height="3.5" transform="rotate(45 6 6)"/><rect x="4.9" y="0" width="2.2" height="3.5" transform="rotate(90 6 6)"/><rect x="4.9" y="0" width="2.2" height="3.5" transform="rotate(135 6 6)"/><rect x="4.9" y="0" width="2.2" height="3.5" transform="rotate(180 6 6)"/><rect x="4.9" y="0" width="2.2" height="3.5" transform="rotate(225 6 6)"/><rect x="4.9" y="0" width="2.2" height="3.5" transform="rotate(270 6 6)"/><rect x="4.9" y="0" width="2.2" height="3.5" transform="rotate(315 6 6)"/></g><circle cx="6" cy="6" r="1.7" fill="#e9eaee"/></svg><div class="r" style="left:1703px;top:183px;width:183px;height:1px;background:#d0d3da;"></div><div class="r" style="left:1704px;top:240px;width:174px;height:24px;background:#ffffff;box-sizing:border-box;border:1px solid #c3cbe0;border-radius:12px"></div><svg class="r" style="left:1707px;top:245px" width="14" height="14"><circle cx="5.5" cy="5.5" r="4.3" fill="none" stroke="#333" stroke-width="1.3"/><path d="M8.5 8.5L12.5 12.5" stroke="#333" stroke-width="1.5"/></svg><div class="t" style="left:1722px;top:245px;font-size:13px;color:#777;font-weight:normal;">搜索</div><div class="r" style="left:1703px;top:270px;width:176px;height:720px;background:#ffffff;"></div><div class="r" style="left:1703px;top:292px;width:176px;height:1px;background:#dde3ee;"></div><div class="r" style="left:1782px;top:270px;width:1px;height:22px;background:#e2e6ef;"></div><div class="r" style="left:1802px;top:270px;width:1px;height:22px;background:#e2e6ef;"></div><div class="r" style="left:1822px;top:270px;width:1px;height:22px;background:#e2e6ef;"></div><div class="r" style="left:1842px;top:270px;width:1px;height:22px;background:#e2e6ef;"></div><div class="r" style="left:1862px;top:270px;width:1px;height:22px;background:#e2e6ef;"></div><div class="t" style="left:1708px;top:275.8px;font-size:12.5px;color:#333;font-weight:normal;">图层</div><div class="t" style="left:1868px;top:275px;font-size:12px;color:#333;font-weight:;clip-path:inset(0 0 0 0)">材</div><div class="t" style="left:1720px;top:297px;font-size:13px;color:#222;font-weight:bold;">默认值</div><svg class="r" style="left:1785px;top:297px" width="16" height="12"><path d="M1.5 6.5L5.5 10.5L14.5 1.5" stroke="#222" stroke-width="1.6" fill="none"/></svg><div class="r" style="left:1844px;top:295px;width:17px;height:17px;background:#000;"></div><svg class="r" style="left:1864px;top:296px" width="15" height="15"><circle cx="7.5" cy="7.5" r="6" fill="#fff" stroke="#222" stroke-width="1"/></svg><svg class="r" style="left:1703px;top:314px" width="176" height="1"><path d="M0 0.5H176" stroke="#bbb" stroke-dasharray="1 2"/></svg><div class="r" style="left:1710px;top:977px;width:46px;height:8px;background:#c3c3c3;border-radius:4px"></div><svg class="r" style="left:9px;top:995px" width="14" height="14"><rect width="14" height="14" fill="#404040"/><rect x="0" y="0" width="4.5" height="14" fill="#505250"/><rect x="5.5" y="2.5" width="6.5" height="9.5" fill="#e9eaee" stroke="#fff" stroke-width="1"/></svg><div class="t" style="left:43px;top:996px;font-size:13px;color:#333;font-weight:normal;">工作平面</div><div class="t" style="left:129px;top:995.5px;font-size:13.5px;color:#333;font-weight:normal;letter-spacing:0.2px">x -26.123</div><div class="t" style="left:218px;top:995.5px;font-size:13.5px;color:#333;font-weight:normal;letter-spacing:0.2px">y -6.521</div><div class="t" style="left:320px;top:995.5px;font-size:13.5px;color:#333;font-weight:normal;">z 0</div><div class="t" style="left:408px;top:996px;font-size:13px;color:#333;font-weight:normal;">毫米</div><div class="r" style="left:475px;top:994px;width:16px;height:16px;background:#000;"></div><div class="t" style="left:497px;top:996px;font-size:13px;color:#333;font-weight:normal;">默认值</div><div class="t" style="left:672px;top:996px;font-size:13px;color:#333;font-weight:normal;">锁定格点</div><div class="t" style="left:743px;top:996px;font-size:13px;color:#333;font-weight:normal;">正交</div><div class="t" style="left:788px;top:996px;font-size:13px;color:#333;font-weight:normal;">平面模式</div><div class="r" style="left:851px;top:991px;width:68px;height:21px;background:#d1daef;border-radius:3px"></div><div class="t" style="left:859px;top:996px;font-size:13px;color:#222;font-weight:bold;">物件锁点</div><div class="r" style="left:922px;top:991px;width:68px;height:21px;background:#d1daef;border-radius:3px"></div><div class="t" style="left:930px;top:996px;font-size:13px;color:#222;font-weight:bold;">智慧轨迹</div><div class="t" style="left:1001px;top:996px;font-size:13px;color:#333;font-weight:normal;letter-spacing:0.3px">操作轴 (工作平面)</div><svg class="r" style="left:1125px;top:994px" width="11" height="14"><path d="M2.5 6V4A3 3 0 0 1 8.5 4V6" stroke="#aaa" stroke-width="1.2" fill="none"/><rect x="1" y="6" width="9" height="7" rx="1" fill="none" stroke="#aaa" stroke-width="1.2"/></svg><div class="t" style="left:1145px;top:996px;font-size:13px;color:#333;font-weight:normal;letter-spacing:0.3px">自动对齐工作平面 (物件)</div><div class="t" style="left:1308px;top:996px;font-size:13px;color:#333;font-weight:normal;">记录建构历史</div><div class="r" style="left:1398px;top:991px;width:54px;height:21px;background:#d1daef;border-radius:3px"></div><div class="t" style="left:1406px;top:996px;font-size:13px;color:#222;font-weight:bold;">过滤器</div><div class="t" style="left:1467px;top:996px;font-size:13px;color:#333;font-weight:normal;">绝对公差:0.001</div><svg class="r" style="left:1883px;top:995px" width="14" height="14"><rect width="14" height="14" fill="#404040"/><rect x="9.5" y="0" width="4.5" height="14" fill="#505250"/><rect x="2.5" y="2.5" width="6.5" height="9.5" fill="#e9eaee" stroke="#fff" stroke-width="1"/></svg><div class="r" style="left:0px;top:1013px;width:1906px;height:2px;background:#d8d9dd;"></div><div class="r" style="left:1903px;top:161px;width:2px;height:852px;background:#d8d9dd;"></div><svg class="r" style="left:0;top:0" width="1906" height="1016"><path d="M0 0H10Q0 0 0 10Z M1906 0H1896Q1906 0 1906 10Z M0 1016V1011Q0 1016 5 1016Z M1906 1016V1011Q1906 1016 1901 1016Z" fill="#7fa3c0"/></svg><div class="r" style="left:0;top:0;width:1906px;height:1016px;box-sizing:border-box;border:1px solid #b7c0d1;border-radius:9px 9px 4px 4px"></div><svg class="r" style="left:0;top:0;overflow:visible" width="1906" height="1016" viewBox="0 0 1906 1016"><defs>
<linearGradient id="gPage" x1="0" y1="0" x2="1" y2="1"><stop offset="0" stop-color="#ffffff"/><stop offset="1" stop-color="#bdbdbd"/></linearGradient>
<linearGradient id="gYel" x1="0" y1="0" x2="0" y2="1"><stop offset="0" stop-color="#ffe98a"/><stop offset="1" stop-color="#f6b400"/></linearGradient>
<linearGradient id="gGray" x1="0" y1="0" x2="0" y2="1"><stop offset="0" stop-color="#f2f2f2"/><stop offset="1" stop-color="#9a9a9a"/></linearGradient>
<radialGradient id="gSph" cx="0.4" cy="0.35" r="0.7"><stop offset="0" stop-color="#ffffff"/><stop offset="0.6" stop-color="#d0d0d0"/><stop offset="1" stop-color="#8a8a8a"/></radialGradient>
<radialGradient id="gBlue" cx="0.35" cy="0.3" r="0.75"><stop offset="0" stop-color="#9fc0ff"/><stop offset="0.35" stop-color="#2a56d8"/><stop offset="1" stop-color="#07137a"/></radialGradient>
<radialGradient id="gGreen" cx="0.3" cy="0.3" r="0.8"><stop offset="0" stop-color="#f4fff0"/><stop offset="0.35" stop-color="#a8f070"/><stop offset="0.8" stop-color="#78d840"/><stop offset="1" stop-color="#3a8a18"/></radialGradient>
<linearGradient id="gHelp" x1="0" y1="0" x2="0" y2="1"><stop offset="0" stop-color="#5b7ff0"/><stop offset="0.6" stop-color="#3f5fd0"/><stop offset="1" stop-color="#10208a"/></linearGradient>
<linearGradient id="gBlueS" x1="0" y1="0" x2="1" y2="1"><stop offset="0" stop-color="#b9c9ff"/><stop offset="1" stop-color="#3d5fe0"/></linearGradient>
<radialGradient id="gBlueB" cx="0.35" cy="0.3" r="0.8"><stop offset="0" stop-color="#d8e2ff"/><stop offset="0.5" stop-color="#6f8ff0"/><stop offset="1" stop-color="#1c3aa8"/></radialGradient>
<linearGradient id="gOr" x1="0" y1="0" x2="0" y2="1"><stop offset="0" stop-color="#ffcf30"/><stop offset="1" stop-color="#ff6a00"/></linearGradient>
<linearGradient id="gGold" x1="0" y1="0" x2="1" y2="0"><stop offset="0" stop-color="#ffe07a"/><stop offset="0.55" stop-color="#f3cf5a"/><stop offset="0.56" stop-color="#c9a22a"/><stop offset="1" stop-color="#d8b03a"/></linearGradient>
<radialGradient id="gBulb" cx="0.55" cy="0.3" r="0.7"><stop offset="0" stop-color="#e8e8e8"/><stop offset="0.5" stop-color="#a8a8a8"/><stop offset="1" stop-color="#7a7a7a"/></radialGradient></defs><path d="M19.75 133.75H30L34.25 138V152.75H19.75Z" fill="url(#gPage)" stroke="#000" stroke-width="1.5" stroke-linejoin="round"/><path d="M30 134V138H34" fill="#fff" stroke="#000" stroke-width="1"/><path d="M45 151.5V139.5Q45 138 46.5 138H51L52.5 139.5H57.5V143" fill="#ffe27a" stroke="#000" stroke-width="1.3"/><path d="M44.75 151.5L48.3 143H64.5L61 151.5Z" fill="url(#gYel)" stroke="#000" stroke-width="1.4" stroke-linejoin="round"/><rect x="73.75" y="133.75" width="19" height="19" rx="1.5" fill="#c8b56a" stroke="#000" stroke-width="1.5"/><rect x="77" y="134.5" width="12.5" height="7" fill="#dcdcdc" stroke="#000" stroke-width="1.2"/><rect x="77.5" y="145.5" width="11.5" height="7" fill="#b8b8b8" stroke="#000" stroke-width="1.2"/><rect x="79" y="147" width="2.5" height="5" fill="#8b7a3a"/><path d="M104.4 141.8L106.6 134.3H118.9L115.8 141.8Z" fill="#fff" stroke="#000" stroke-width="1.3" stroke-linejoin="round"/><ellipse cx="111.8" cy="138.2" rx="2.2" ry="1.6" fill="#b0b0b0"/><path d="M116.8 143.3L120.8 140.5V149.3L116.8 152.5Z" fill="#4a4a4a" stroke="#000" stroke-width="1.2" stroke-linejoin="round"/><rect x="101.3" y="143.3" width="15.5" height="9.2" rx="1.5" fill="#d4d4d4" stroke="#000" stroke-width="1.4"/><path d="M101.5 145.6H116.5M101.5 149.4H116.5" stroke="#000" stroke-width="1.1"/><path d="M130.3 134.3H144.6V149.7L140.3 153.5H130.3Z" fill="url(#gPage)" stroke="#000" stroke-width="1.4" stroke-linejoin="round"/><path d="M140.5 153.3Q140.5 150 144.4 149.9" fill="#fff" stroke="#000" stroke-width="0.9"/><path d="M135.6 138.2L140.6 132.4H146.6V137.6L140.6 140.2Z" fill="#9a9a9a"/><path d="M140.6 132.4H146.6V137.4L141.5 136Z" fill="#fff"/><rect x="147.6" y="132.1" width="2.4" height="5.7" fill="#000"/><path d="M161 134L170.5 147M173 134L163.5 147" stroke="#000" stroke-width="1.5"/><ellipse cx="162.5" cy="149.5" rx="2" ry="2.5" fill="none" stroke="#1a2a6a" stroke-width="1.3" transform="rotate(30 162.5 149.5)"/><ellipse cx="171.5" cy="149.5" rx="2" ry="2.5" fill="none" stroke="#1a2a6a" stroke-width="1.3" transform="rotate(-30 171.5 149.5)"/><path d="M187.75 133.75H195L197.5 136.5V147.5H187.75Z" fill="#fff" stroke="#000" stroke-width="1.4"/><path d="M191.75 139.25H199.5L202.25 142V152.75H191.75Z" fill="url(#gPage)" stroke="#000" stroke-width="1.4"/><rect x="216.5" y="134.75" width="13" height="18" rx="2" fill="#ffd96a" stroke="#000" stroke-width="1.4"/><rect x="219.5" y="134" width="7" height="3.5" rx="1" fill="#fff" stroke="#000" stroke-width="1.2"/><path d="M259 142Q256 136 250 138Q247 139 245.5 142" stroke="#000" stroke-width="2.5" fill="none"/><path d="M258 140Q259 141.5 259.5 142.5" stroke="#666" stroke-width="2.5"/><path d="M241 146L242.5 139.5L248.5 143.5Z" fill="#000"/><path d="M274 152.5L270 145.5Q269.5 144 271 144L274 147V136Q274 134.5 275.5 134.5Q277 134.5 277 136V133.5Q277 132.3 278.3 132.3Q279.7 132.3 279.7 133.5V134Q279.7 133 281 133Q282.5 133 282.5 134.5V136Q282.5 135 284 135Q285.5 135 285.5 136.5V146Q285.5 150 283.5 152.5" fill="#fff" stroke="#000" stroke-width="1.2"/><path d="M277 136V143M279.7 134V143M282.5 136V143" stroke="#000" stroke-width="0.9"/><ellipse cx="307" cy="143" rx="10.5" ry="3.3" fill="none" stroke="#111" stroke-width="0.8"/><ellipse cx="307" cy="143" rx="3" ry="10.5" fill="none" stroke="#111" stroke-width="0.8" transform="rotate(5 307 143)"/><path d="M309.5 136.5L312 141.5H307Z" fill="#000"/><path d="M302 145.5L307 143V148Z" fill="#000"/><circle cx="337.5" cy="140.5" r="6" fill="#fff" stroke="#000" stroke-width="1.3"/><path d="M335 138.5H340M337.5 136V141M335 143H340" stroke="#000" stroke-width="1"/><path d="M327 151L333.5 144.5" stroke="#000" stroke-width="2.5"/><rect x="358.5" y="133.5" width="15" height="14" fill="none" stroke="#000" stroke-width="1.1" stroke-dasharray="2 1.5"/><circle cx="362.5" cy="143.5" r="6" fill="#eee" stroke="#000" stroke-width="1.3"/><path d="M354 152L358.5 147.5" stroke="#000" stroke-width="2.5"/><path d="M381 133H386L381 138Z M401 133H396L401 138Z M381 153H386L381 148Z M401 153H396L401 148Z" fill="#000"/><circle cx="392.5" cy="141" r="6" fill="#eee" stroke="#000" stroke-width="1.3"/><path d="M383 151L388.5 145.5" stroke="#000" stroke-width="2.5"/><circle cx="420.5" cy="142" r="7" fill="#eee" stroke="#000" stroke-width="1.3"/><circle cx="422.5" cy="140" r="3" fill="#f0e000"/><circle cx="419" cy="143.5" r="2.5" fill="#f0e000"/><path d="M410.5 152.5L415.5 147.5" stroke="#000" stroke-width="2.5"/><path d="M456 138.5Q452 133 445 136Q442 137.5 440.5 139.5" stroke="#444" stroke-width="2.5" fill="none"/><path d="M437 142.5L439 135.5L444.5 140Z" fill="#000"/><circle cx="447.5" cy="146.5" r="4.5" fill="#eee" stroke="#000" stroke-width="1.3"/><path d="M438.5 153.5L444 149" stroke="#000" stroke-width="2.5"/><rect x="464.75" y="133.25" width="19.5" height="18.5" fill="#c8c8c8" stroke="#000" stroke-width="1.5"/><path d="M474.5 133V152M464.5 142.5H484.5" stroke="#000" stroke-width="1.5"/><path d="M475.5 134.5H479.5" stroke="#2233aa" stroke-width="1"/><path d="M493.5 146L494.5 142.5Q496 141 499 140.5L500.5 137.5H507.5L510 140.5Q513.5 141 513.8 143.5L513.5 146Z" fill="#e01010"/><path d="M502 138.3H507L508 140.5H501.5Z" fill="#fff"/><circle cx="497.5" cy="146" r="2" fill="#fff" stroke="#000" stroke-width="1.3"/><circle cx="508" cy="146" r="2" fill="#fff" stroke="#000" stroke-width="1.3"/><path d="M492 149H514" stroke="#888" stroke-width="0.8"/><path d="M520.5 147.5L527 138L542 142L535.5 153.5Z M523.5 143L539 147M525.5 140.5L540.5 144.5M522 145.5L537.5 150M531 139L526 151M535 140L530.5 152.5" fill="none" stroke="#8a8a8a" stroke-width="0.8"/><path d="M531 144L533 140" stroke="#00b000" stroke-width="1.3"/><path d="M531 145L539.5 147.5" stroke="#d01818" stroke-width="1.3"/><rect x="529" y="144" width="3" height="3" fill="#fff" stroke="#000" stroke-width="1"/><circle cx="558.5" cy="142.5" r="8.5" fill="none" stroke="#555" stroke-width="1"/><rect x="556" y="141" width="3" height="3" fill="#fff" stroke="#000" stroke-width="1"/><path d="M559 142.5H569" stroke="#000" stroke-width="1"/><circle cx="583.5" cy="139.5" r="3" fill="#ffe000" stroke="#b06000" stroke-width="0.8"/><rect x="588.5" y="138.5" width="6" height="6" fill="#ffe000" stroke="#b06000" stroke-width="0.8"/><path d="M582 150.5L585.5 145L589 150.5Z" fill="none" stroke="#c06000" stroke-width="1"/><path d="M594.5 132.5H597.5V135.5M577.5 150V153H580.5" fill="none" stroke="#000" stroke-width="1.2"/><path d="M612 152Q611.5 147 610 145Q608 142 608 139Q608 133.5 615 133.5Q622 133.5 622 139Q622 142 620 145Q618.5 147 618 152Z" fill="url(#gBulb)" stroke="#777" stroke-width="0.8"/><ellipse cx="615" cy="151" rx="2" ry="1.5" fill="#fff"/><path d="M639.5 141V139Q639.5 135 643 135Q646.5 135 646.5 139V141" fill="none" stroke="#000" stroke-width="2"/><rect x="637.5" y="140.5" width="11" height="10" rx="1.2" fill="url(#gGray)" stroke="#000" stroke-width="1.4"/><path d="M640 144H646M640 146.5H646" stroke="#777" stroke-width="1"/><path d="M662 134.5L680 139V149.5L668 152.5L662.5 147Z" fill="#1f3fa0" stroke="#000" stroke-width="1"/><path d="M662.5 138L668 145L680 142V147L668 150L662.5 143Z" fill="#d8d8d8"/><path d="M662 134.5L680 139L668 142.5Z" fill="#ff8060"/><path d="M668 142.5L680 139V142.5L668 146Z" fill="#e01818"/><path d="M662.5 139L668 146V149.5L662.5 143Z" fill="#fff"/><circle cx="727" cy="143" r="8.8" fill="url(#gSph)" stroke="#000" stroke-width="1.4"/><path d="M725.5 134.3Q723.5 143 725 151.5M718.5 143.5Q727 146 735.5 142.5" fill="none" stroke="#000" stroke-width="1.1"/><path d="M744 134.5H767M744 138.5H767M744 142.5H767M744 146.5H767M744 150.5H767M746 131.5V154.5M750 131.5V154.5M754 131.5V154.5M758 131.5V154.5M762 131.5V154.5M766 131.5V154.5" stroke="#666" stroke-width="0.7"/><circle cx="755" cy="143" r="8.8" fill="url(#gSph)" stroke="#000" stroke-width="1.4"/><path d="M753.5 134.3Q751.5 143 753 151.5M746.5 143.5Q755 146 763.5 142.5" fill="none" stroke="#000" stroke-width="1.1"/><ellipse cx="785" cy="150" rx="9" ry="2.5" fill="#000" opacity="0.35"/><circle cx="783.5" cy="142.5" r="9.3" fill="url(#gBlue)"/><ellipse cx="779.5" cy="138" rx="2.5" ry="1.7" fill="#fff" opacity="0.9" transform="rotate(-35 779.5 138)"/><circle cx="812" cy="143" r="6" fill="#f4f4f6"/><path d="M810 136.5L821.5 132.5L817.5 144.5Z" fill="url(#gOr)" stroke="#333" stroke-width="0.8"/><path d="M810 136.5L814 135L817.5 144.5Z" fill="#fff6d8"/><g transform="translate(838.5 143)"><path d="M-2-10H2L3-7L6-9L9-6L7-3L10-2V2L7 3L9 6L6 9L3 7L2 10H-2L-3 7L-6 9L-9 6L-7 3L-10 2V-2L-7-3L-9-6L-6-9L-3-7Z" fill="#f3d880" stroke="#c07818" stroke-width="1.2"/><rect x="-2.5" y="-5" width="5" height="9" rx="1.5" fill="#9a9a9a" stroke="#333" stroke-width="0.8"/></g><path d="M856 133.5H865M856 144.5H865M865.5 145V154M876 145V154M858 135V143M867 151.5H875" stroke="#000" stroke-width="1.2"/><path d="M856.8 136.5L858 134.5L859.2 136.5ZM856.8 141.5L858 143.5L859.2 141.5Z M868.5 150.3L866.5 151.5L868.5 152.7Z M873.5 150.3L875.5 151.5L873.5 152.7Z" fill="#000"/><rect x="865" y="132" width="3" height="3" fill="#fff" stroke="#000" stroke-width="1"/><rect x="865" y="143" width="3" height="3" fill="#fff" stroke="#000" stroke-width="1"/><rect x="874.5" y="142.5" width="3" height="3" fill="#fff" stroke="#000" stroke-width="1"/><circle cx="895" cy="142.8" r="10.2" fill="url(#gGreen)" stroke="#000" stroke-width="1.3"/><path d="M885 146Q886.5 142.5 889.5 142.3Q892 141.3 894 142.8Q895.5 144.5 894 146.5Q892.5 148.5 892.3 150.3Q890 153.5 887.5 151.5Q885 149.5 885 146Z" fill="#000"/><path d="M891.5 149.8Q896 151.3 901.8 150.2" stroke="#000" stroke-width="1.1" fill="none"/><path d="M888 144Q890 143 892 143.5" stroke="#555" stroke-width="1.5" fill="none"/><path d="M893.3 133V141.5" stroke="#d8f0c8" stroke-width="0.7"/><path d="M895 141L902.5 136.5" stroke="#333" stroke-width="0.7" stroke-dasharray="1 0.6"/><circle cx="923" cy="143" r="9.8" fill="url(#gHelp)"/><text x="923" y="151.3" text-anchor="middle" font-family="Liberation Serif" font-weight="bold" font-size="20" fill="#fff">?</text><path d="M97 152V157H92Z" fill="#555"/><path d="M265 152V157H260Z" fill="#555"/><path d="M461 152V157H456Z" fill="#555"/><path d="M489 152V157H484Z" fill="#555"/><path d="M517 152V157H512Z" fill="#555"/><path d="M545 152V157H540Z" fill="#555"/><path d="M573 152V157H568Z" fill="#555"/><path d="M601 152V157H596Z" fill="#555"/><path d="M629 152V157H624Z" fill="#555"/><path d="M657 152V157H652Z" fill="#555"/><path d="M685 152V157H680Z" fill="#555"/><path d="M713 152V157H708Z" fill="#555"/><path d="M741 152V157H736Z" fill="#555"/><path d="M769 152V157H764Z" fill="#555"/><path d="M797 152V157H792Z" fill="#555"/><path d="M825 152V157H820Z" fill="#555"/><path d="M853 152V157H848Z" fill="#555"/><path d="M881 152V157H876Z" fill="#555"/><path d="M909 152V157H904Z" fill="#555"/><path d="M937 152V157H932Z" fill="#555"/><path d="M12 179V194L15.5 190.5L18.5 196L20.5 195L17.5 189.5H22Z" fill="#fff" stroke="#000" stroke-width="1.1" stroke-linejoin="round"/><circle cx="44.5" cy="186.5" r="2" fill="#fff" stroke="#000" stroke-width="1"/><path d="M65.7 194L70.7 181L80 191" fill="none" stroke="#000" stroke-width="1.1"/><rect x="63.95" y="192.25" width="3.5" height="3.5" fill="#fff" stroke="#000" stroke-width="1.1"/><rect x="68.95" y="179.25" width="3.5" height="3.5" fill="#fff" stroke="#000" stroke-width="1.1"/><rect x="78.25" y="189.25" width="3.5" height="3.5" fill="#fff" stroke="#000" stroke-width="1.1"/><path d="M93 181Q96 179 100 179.5Q106 181 106 187Q106 193 99 193.5Q96 193.5 93 193" fill="none" stroke="#000" stroke-width="1.2"/><rect x="91.25" y="179.25" width="3.5" height="3.5" fill="#fff" stroke="#000" stroke-width="1.1"/><rect x="105.25" y="176.25" width="3.5" height="3.5" fill="#fff" stroke="#000" stroke-width="1.1"/><rect x="91.25" y="191.25" width="3.5" height="3.5" fill="#fff" stroke="#000" stroke-width="1.1"/><rect x="106.75" y="193.25" width="3.5" height="3.5" fill="#fff" stroke="#000" stroke-width="1.1"/><circle cx="16.5" cy="214" r="9.3" fill="none" stroke="#000" stroke-width="1.2"/><path d="M17 214L23 208.3" stroke="#555" stroke-width="0.8"/><rect x="15.25" y="212.25" width="3.5" height="3.5" fill="#fff" stroke="#000" stroke-width="1.1"/><rect x="21.25" y="206.55" width="3.5" height="3.5" fill="#fff" stroke="#000" stroke-width="1.1"/><ellipse cx="45" cy="215.5" rx="10" ry="6.8" fill="none" stroke="#000" stroke-width="1.2"/><path d="M45 209V216H53.5" stroke="#333" stroke-width="0.8" fill="none"/><rect x="43.25" y="214.25" width="3.5" height="3.5" fill="#fff" stroke="#000" stroke-width="1.1"/><rect x="43.25" y="207.25" width="3.5" height="3.5" fill="#fff" stroke="#000" stroke-width="1.1"/><rect x="52.05" y="214.25" width="3.5" height="3.5" fill="#fff" stroke="#000" stroke-width="1.1"/><path d="M65.7 207Q74 208 80 215" fill="none" stroke="#000" stroke-width="1.2"/><path d="M65.7 207V223.5L80 215" fill="none" stroke="#555" stroke-width="0.8"/><rect x="63.95" y="205.25" width="3.5" height="3.5" fill="#fff" stroke="#000" stroke-width="1.1"/><rect x="78.25" y="213.25" width="3.5" height="3.5" fill="#fff" stroke="#000" stroke-width="1.1"/><rect x="63.95" y="221.65" width="3.5" height="3.5" fill="#fff" stroke="#000" stroke-width="1.1"/><rect x="92.5" y="209.5" width="17" height="11" fill="none" stroke="#000" stroke-width="1.2"/><rect x="105.45" y="208.25" width="3.5" height="3.5" fill="#fff" stroke="#000" stroke-width="1.1"/><rect x="91.25" y="218.25" width="3.5" height="3.5" fill="#fff" stroke="#000" stroke-width="1.1"/><path d="M8.5 242L12.5 235.5H20.5L24.5 242L20.5 249H12.5Z" fill="none" stroke="#000" stroke-width="1.1"/><path d="M17 242H24" stroke="#555" stroke-width="0.8"/><rect x="14.75" y="240.25" width="3.5" height="3.5" fill="#fff" stroke="#000" stroke-width="1.1"/><rect x="22.25" y="240.25" width="3.5" height="3.5" fill="#fff" stroke="#000" stroke-width="1.1"/><path d="M53 235.5V249" stroke="#999" stroke-width="0.8" fill="none"/><path d="M37 235H53" stroke="#999" stroke-width="0.8"/><path d="M37 235Q52 234.5 53 250" fill="none" stroke="#000" stroke-width="1.8"/><rect x="35.25" y="233.25" width="3.5" height="3.5" fill="#fff" stroke="#000" stroke-width="1.1"/><rect x="51.25" y="248.25" width="3.5" height="3.5" fill="#fff" stroke="#000" stroke-width="1.1"/><path d="M69 235L81 235L77 251L65 246Z" fill="url(#gBlueS)" stroke="#000" stroke-width="1"/><path d="M75 235L71 248.5M67 240.5L79 243" stroke="#223" stroke-width="0.8"/><rect x="67.25" y="233.25" width="3.5" height="3.5" fill="#fff" stroke="#000" stroke-width="1.1"/><rect x="79.25" y="233.25" width="3.5" height="3.5" fill="#fff" stroke="#000" stroke-width="1.1"/><rect x="63.25" y="244.25" width="3.5" height="3.5" fill="#fff" stroke="#000" stroke-width="1.1"/><rect x="74.75" y="249.25" width="3.5" height="3.5" fill="#fff" stroke="#000" stroke-width="1.1"/><path d="M91.5 238.5L98.7 233Q106 235 108.8 242V246.5L101.6 252.4V245Q100 241 91.5 238.5Z" fill="#fff" stroke="#000" stroke-width="1.1" stroke-linejoin="round"/><path d="M95.5 235.5L99.2 233.4Q106 235.5 108.6 242.3V245L101.6 247.8Q101 242 95.5 235.5Z" fill="url(#gBlueS)"/><path d="M101.6 247.8L108.6 245" stroke="#000" stroke-width="0.8"/><path d="M8.5 266L17 261.5L25.5 264.5V276.5L17 280L8.5 276.5Z" fill="#5a7ff0" stroke="#000" stroke-width="1.2"/><path d="M8.5 266L17 269L25.5 264.5M17 269V280" fill="none" stroke="#000" stroke-width="0.9"/><path d="M8.5 266L17 261.5L25.5 264.5L17 269Z" fill="#b8c8ff"/><path d="M17 269L25.5 264.5V276.5L17 280Z" fill="#3050c0"/><circle cx="50" cy="266" r="6" fill="url(#gBlueB)" stroke="#000" stroke-width="1"/><circle cx="40" cy="275" r="6" fill="url(#gBlueB)" stroke="#000" stroke-width="1"/><path d="M44 264Q49 268 56 267M50 260Q48 265 50 272M34 276Q40 279 46 276M39 269Q38 274 40 281" fill="none" stroke="#223" stroke-width="0.7"/><ellipse cx="73" cy="262.5" rx="5.5" ry="2" fill="none" stroke="#000" stroke-width="0.9"/><path d="M62.5 268Q73 273 83.5 268V278Q73 284 62.5 278Z" fill="#6f8ff0" stroke="#000" stroke-width="1.1"/><ellipse cx="73" cy="276" rx="5" ry="2" fill="none" stroke="#fff" stroke-width="1.3"/><path d="M90.5 275L96 266Q100 262 104 261.5L111.5 264L106 272.5Q102 279 98 281Z" fill="url(#gBlueS)" stroke="#000" stroke-width="1.1"/><path d="M94 270L109 268M97 277L104 263M101.5 279L108 266" stroke="#223" stroke-width="0.7" fill="none"/><path d="M7 295Q8 291 11 292Q11 289 14 289Q16 288 17 291Q20 290 20 293Q19 296 17 297L15 300L10 299Q7 298 7 295Z" fill="#f4a800" stroke="#000" stroke-width="0.8"/><path d="M15 299Q18 297 20 298Q21 296 24 298Q25 300 27 302Q28 305 25 306Q25 309 22 309Q19 310 18 307Q15 307 14 304Q12 302 15 299Z" fill="#fff" stroke="#000" stroke-width="0.8"/><path d="M34 310V300L38 307.5L37.5 290L42 305L55 290L47 306L56 306L47 310Z" fill="url(#gOr)" stroke="#000" stroke-width="0.8"/><rect x="62" y="299" width="9.5" height="4.5" fill="#fff" stroke="#000" stroke-width="1"/><path d="M72 290H78L72 304Z" fill="#14247a"/><path d="M72.5 304L77 300L82 306L78 309.5Z" fill="#fff" stroke="#000" stroke-width="1"/><rect x="91.5" y="300.5" width="18.5" height="5.5" fill="#fff" stroke="#000" stroke-width="1"/><path d="M101 292H107L101 305Z" fill="#14247a"/><circle cx="17" cy="323" r="4.5" fill="#5a7ff0" stroke="#000" stroke-width="2"/><circle cx="12.5" cy="330" r="4.5" fill="#fff" stroke="#000" stroke-width="2"/><circle cx="21.5" cy="330" r="4.5" fill="#14247a" stroke="#000" stroke-width="2"/><circle cx="44.5" cy="322.5" r="3.5" fill="#5a7ff0"/><circle cx="39.5" cy="331" r="3.5" fill="#fff" stroke="#000" stroke-width="0.9"/><circle cx="50" cy="331" r="3.5" fill="#14247a"/><path d="M62.5 322.5L66 322Q76 322 78.5 333V338" fill="none" stroke="#000" stroke-width="1.8"/><rect x="64.5" y="320.5" width="3" height="3" fill="#fff" stroke="#000" stroke-width="1.1"/><rect x="76.5" y="330.5" width="3" height="3" fill="#fff" stroke="#000" stroke-width="1.1"/><path d="M90.5 323.5Q104 321 105.5 337" fill="none" stroke="#000" stroke-width="2"/><path d="M90.5 318.5H96M101 320Q108 325 109.5 331M109.5 334V338" fill="none" stroke="#000" stroke-width="1" stroke-dasharray="1 1.2"/><rect x="96.5" y="316.5" width="3" height="3" fill="#fff" stroke="#000" stroke-width="1.1"/><rect x="108.5" y="328.5" width="3" height="3" fill="#fff" stroke="#000" stroke-width="1.1"/><path d="M8.5 345.5L24 350V356L21.5 355L21 353L18.5 352.5V362L21 363V365.5L12 363.5V361L14.5 361V351.5L11.5 351L11 353.5L8.5 353Z" fill="#5a7ff0" stroke="#000" stroke-width="1.1" stroke-linejoin="round"/><rect x="36.5" y="357.5" width="5.5" height="5.5" fill="#e8e8e8" stroke="#000" stroke-width="1.1"/><rect x="48.5" y="345" width="6" height="5.5" fill="#6f8ff0" stroke="#000" stroke-width="1.1"/><path d="M42 357L47 352" stroke="#000" stroke-width="0.9"/><path d="M45.5 351.5L47.5 351.5L47 353.5Z" fill="#000"/><rect x="64.5" y="345.5" width="5.5" height="5.5" fill="#6f8ff0" stroke="#000" stroke-width="1.1"/><rect x="73.5" y="348.5" width="5.5" height="5.5" fill="#6f8ff0" stroke="#000" stroke-width="1.1"/><rect x="72" y="351.5" width="5.5" height="5.5" fill="#6f8ff0" stroke="#000" stroke-width="1.1"/><rect x="64.5" y="357" width="5.5" height="5.5" fill="#e8e8e8" stroke="#000" stroke-width="1.1"/><rect x="73.5" y="359.5" width="5.5" height="5.5" fill="#6f8ff0" stroke="#000" stroke-width="1.1"/><rect x="90.5" y="345.5" width="5.5" height="14" fill="url(#gGray)" stroke="#000" stroke-width="1.1"/><path d="M96.8 359.5L106 350L110.5 354L101 363.5Z" fill="#6f8ff0" stroke="#000" stroke-width="1.1" stroke-linejoin="round"/><path d="M96 346Q102 345 104.5 349.5" fill="none" stroke="#000" stroke-width="0.8"/><path d="M102.5 349L105 351L105.5 348Z" fill="#000"/><path d="M8.5 378L17 373.5L26 377V389L17 393L8.5 389Z" fill="#5a7ff0" stroke="#000" stroke-width="1.2"/><path d="M8.5 378L17 373.5L26 377L17 381Z" fill="#b8c8ff"/><path d="M14 386L20 384V391L14 392.5Z" fill="#fff" stroke="#000" stroke-width="0.8"/><path d="M34 390L38 385.5H56L52 390Z" fill="#6f8ff0" stroke="#000" stroke-width="1"/><path d="M39 387V376M45 387V376M51 387V376" stroke="#999" stroke-width="1.5"/><path d="M37 377L39 374L41 377ZM43 377L45 374L47 377ZM49 377L51 374L53 377Z" fill="#999"/><rect x="63.5" y="373.5" width="4.5" height="4.5" fill="#8fa8f8" stroke="#000" stroke-width="1.1"/><rect x="63.5" y="380.5" width="4.5" height="4.5" fill="#8fa8f8" stroke="#000" stroke-width="1.1"/><rect x="63.5" y="387.5" width="4.5" height="4.5" fill="#fff" stroke="#000" stroke-width="1.1"/><rect x="70.5" y="373.5" width="4.5" height="4.5" fill="#8fa8f8" stroke="#000" stroke-width="1.1"/><rect x="70.5" y="380.5" width="4.5" height="4.5" fill="#8fa8f8" stroke="#000" stroke-width="1.1"/><rect x="70.5" y="387.5" width="4.5" height="4.5" fill="#8fa8f8" stroke="#000" stroke-width="1.1"/><rect x="77.5" y="373.5" width="4.5" height="4.5" fill="#8fa8f8" stroke="#000" stroke-width="1.1"/><rect x="77.5" y="380.5" width="4.5" height="4.5" fill="#8fa8f8" stroke="#000" stroke-width="1.1"/><rect x="77.5" y="387.5" width="4.5" height="4.5" fill="#8fa8f8" stroke="#000" stroke-width="1.1"/><rect x="96.5" y="373.5" width="9.5" height="4" fill="#fff" stroke="#000" stroke-width="1"/><rect x="98" y="381" width="6" height="3.5" fill="#fff" stroke="#000" stroke-width="1"/><rect x="97" y="387" width="8" height="4.5" fill="#fff" stroke="#000" stroke-width="1"/><path d="M101.2 372V394" stroke="#d02020" stroke-width="1.2"/><path d="M8.5 404.5L14 401.5V419.5L8.5 416Z" fill="#fff" stroke="#000" stroke-width="1"/><path d="M13 406L20 401.5L26 404L18 422L11 418Z" fill="#6f8ff0" stroke="#000" stroke-width="1.1"/><rect x="41.5" y="400.5" width="3" height="21" fill="#8fa8f8" stroke="#000" stroke-width="1"/><circle cx="35" cy="405.5" r="1.8" fill="#000"/><circle cx="49" cy="405.5" r="1.8" fill="#000"/><path d="M34 409L39 409L38 414L42 414M48 408L43 410L49 412L51 416L56 421" fill="none" stroke="#000" stroke-width="1.3"/><path d="M63 414.5L66.5 412L68.5 416.5L81.5 402L82.5 403.5L68.5 420Z" fill="#000"/><path d="M91.5 407.5L96.5 404L103 405.5V414L98 417.5L91.5 415.5Z" fill="#a8a8a8" stroke="#000" stroke-width="1" stroke-linejoin="round"/><path d="M91.5 407.5L97.5 409.5L103 405.5L96.5 404Z" fill="#e8e8e8"/><path d="M97.5 409.5V417.5" stroke="#000" stroke-width="0.8"/><path d="M91.5 407.5L97.5 409.5L103 405.5" fill="none" stroke="#000" stroke-width="0.8"/><path d="M104.5 405L111 416.5Q109.5 419.5 105 419.5Q101 419 100.5 416.5Z" fill="url(#gGray)" stroke="#000" stroke-width="1" stroke-linejoin="round"/><path d="M8.5 445.5L16.5 436L24.5 444L18.5 449.5Z" fill="url(#gGold)" stroke="#000" stroke-width="1"/><path d="M14.5 433.5L18 429.5H25V435L19 435.5L16 434.5Z" fill="#fff" stroke="#000" stroke-width="0.9"/><rect x="25.5" y="428.5" width="2" height="5.5" fill="#000"/><path d="M59 196V201H54Z" fill="#555"/><path d="M87 196V201H82Z" fill="#555"/><path d="M115 196V201H110Z" fill="#555"/><path d="M31 224V229H26Z" fill="#555"/><path d="M59 224V229H54Z" fill="#555"/><path d="M87 224V229H82Z" fill="#555"/><path d="M115 224V229H110Z" fill="#555"/><path d="M31 252V257H26Z" fill="#555"/><path d="M59 252V257H54Z" fill="#555"/><path d="M87 252V257H82Z" fill="#555"/><path d="M115 252V257H110Z" fill="#555"/><path d="M31 280V285H26Z" fill="#555"/><path d="M59 280V285H54Z" fill="#555"/><path d="M87 280V285H82Z" fill="#555"/><path d="M115 280V285H110Z" fill="#555"/><path d="M31 308V313H26Z" fill="#555"/><path d="M31 336V341H26Z" fill="#555"/><path d="M115 336V341H110Z" fill="#555"/><path d="M59 364V369H54Z" fill="#555"/><path d="M31 392V397H26Z" fill="#555"/><path d="M59 392V397H54Z" fill="#555"/><path d="M87 392V397H82Z" fill="#555"/><path d="M115 392V397H110Z" fill="#555"/><path d="M31 420V425H26Z" fill="#555"/><path d="M59 420V425H54Z" fill="#555"/><path d="M87 420V425H82Z" fill="#555"/><path d="M115 420V425H110Z" fill="#555"/><path d="M31 448V453H26Z" fill="#555"/><path d="M1708 195.5L1719 198.5V204L1712 206L1708.5 202Z" fill="#1f3fa0" stroke="#000" stroke-width="0.8"/><path d="M1708 195.5L1719 198.5L1712 200.5Z" fill="#ff8060"/><path d="M1708.5 197.5L1712 201V204L1708.5 200Z" fill="#fff"/><path d="M1712 200.5L1719 198.5V201L1712 203Z" fill="#e01818"/><path d="M1716.5 199.5V207M1712.7 203.3H1720.3" stroke="#fff" stroke-width="3.2"/><path d="M1716.5 200V206.5M1713.2 203.3H1719.8" stroke="#000" stroke-width="1.6"/><path d="M1730 195L1734 193.5L1736 196L1735 201L1733 206H1730Z" fill="none" stroke="#ababab" stroke-width="1"/><path d="M1735 200L1740 198L1742 201L1741 205L1737 207L1735 205Z" fill="#e4e4e4" stroke="#ababab" stroke-width="1"/><path d="M1752 195L1764 207M1764 195L1752 207" stroke="#b0b0b0" stroke-width="2"/><path d="M1774 201Q1774 195 1779 194.5L1781 197L1785 199V205Q1782 207 1779 207Q1774 207 1774 201Z" fill="none" stroke="#b0b0b0" stroke-width="1.1"/><path d="M1778 200L1782 197.5L1786 199.5V205L1781 207L1778 205Z" fill="#e0e0e0" stroke="#b0b0b0" stroke-width="0.8"/><path d="M1795.5 204.5L1802 197.5L1808.5 204.5Z" fill="none" stroke="#aeaeae" stroke-width="1.1"/><path d="M1817.5 197.5H1830.5L1824 204.5Z" fill="none" stroke="#aeaeae" stroke-width="1.1"/><path d="M1849.5 194.5V207L1841.5 201Z" fill="none" stroke="#aeaeae" stroke-width="1.1"/><path d="M1861.5 195Q1868 192.5 1874.5 195L1869.5 200.5V208L1866.5 206.5V200.5Z" fill="url(#gBlueS)" stroke="#14247a" stroke-width="1"/><path d="M1887 196L1899 199.5V205L1891 208.5L1887.5 203Z" fill="#1f3fa0" stroke="#000" stroke-width="0.8"/><path d="M1887 196L1899 199.5L1891 202Z" fill="#ff8060"/><path d="M1887.5 198.5L1891 202.5V205.5L1887.5 201.5Z" fill="#fff"/><path d="M1891 202L1899 199.5V202.5L1891 205Z" fill="#e01818"/><rect x="1708.5" y="216.5" width="11" height="14" fill="#fff" stroke="#888" stroke-width="1"/><path d="M1708.5 219H1719.5M1708.5 222.5H1719.5M1708.5 226H1719.5M1712 216.5V230.5M1715.8 216.5V230.5" stroke="#888" stroke-width="1"/><rect x="1708.5" y="216.5" width="11" height="2" fill="#555"/><path d="M1730 218H1742M1730 223.3H1742M1730 228.5H1742" stroke="#000" stroke-width="2"/><circle cx="1758" cy="223" r="7.3" fill="url(#gHelp)"/><text x="1758" y="228.3" text-anchor="middle" font-family="Liberation Serif" font-weight="bold" font-size="14.5" fill="#fff">?</text><rect x="1886" y="266.5" width="14.5" height="11" rx="0.5" fill="url(#gGray)" stroke="#111" stroke-width="1.5"/><path d="M1890 280.5H1896.5" stroke="#111" stroke-width="1.5"/><path d="M1892 278V280" stroke="#111" stroke-width="1.5"/><rect x="1886" y="302.5" width="14.5" height="15" fill="#4a70d8" stroke="#666" stroke-width="1.2"/><rect x="1886" y="302.5" width="14.5" height="3" fill="#1a2a70"/><text x="1893.2" y="316" text-anchor="middle" font-family="Liberation Serif" font-weight="bold" font-size="11" fill="#fff">?</text><rect x="9" y="7" width="16" height="16" rx="0.6" fill="#000"/><path d="M9 7H12.8L15.5 12.5L18 14.3L20.3 16L25 15.6V16.3L18.6 22.6L9 15Z" fill="#fff"/><path d="M10.3 13.6Q11 10 12.6 7.3" stroke="#000" stroke-width="1" fill="none"/><path d="M12.3 15.5L14.5 14L16 16.5" stroke="#000" stroke-width="0.9" fill="none"/><ellipse cx="22.3" cy="9.6" rx="1.3" ry="1.5" fill="none" stroke="#fff" stroke-width="0.8"/><ellipse cx="22.3" cy="12.3" rx="1.5" ry="1.6" fill="none" stroke="#fff" stroke-width="0.8"/></svg><div class="r" style="left:689.0px;top:133.5px;width:19.0px;height:19.0px;border-radius:50%;background:conic-gradient(from 0deg,#ff0000,#ffff00,#00ff00,#00ffff,#0000ff,#ff00ff,#ff0000);box-shadow:0 0 0 1px #000"></div><div class="r" style="left:693.5px;top:138px;width:10px;height:10px;border-radius:50%;background:#fff;box-shadow:0 0 0 1px rgba(0,0,0,0.5)"></div><div class="r" style="left:1886.7px;top:231.7px;width:12.6px;height:12.6px;border-radius:50%;background:conic-gradient(from 0deg,#ff0000,#ffff00,#00ff00,#00ffff,#0000ff,#ff00ff,#ff0000);box-shadow:0 0 0 1px #000"></div><div class="r" style="left:1889.7px;top:234.7px;width:6.6px;height:6.6px;border-radius:50%;background:#fff;box-shadow:0 0 0 1px rgba(0,0,0,0.5)"></div>
</body></html>
